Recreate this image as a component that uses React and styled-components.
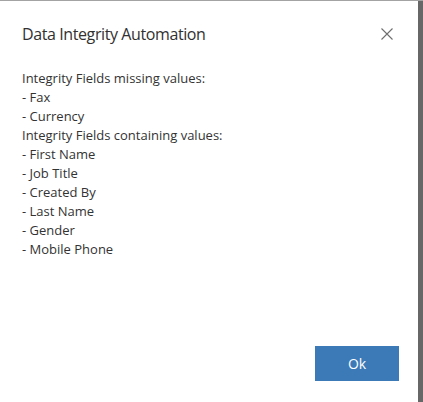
import React from "react";
import styled, { createGlobalStyle } from "styled-components";

const Global = createGlobalStyle`
  html, body { margin: 0; padding: 0; background: #676767; }
  body { font-family: "Open Sans", "Noto Sans", sans-serif; }
`;

const Page = styled.div`
  width: 423px;
  height: 402px;
  background: #676767;
  border-top: 1px solid #a3a3a3;
  box-sizing: border-box;
  overflow: hidden;
`;

const Dialog = styled.div`
  width: 418px;
  height: 401px;
  background: #ffffff;
  box-sizing: border-box;
  padding: 0 0 21px 22px;
  display: flex;
  flex-direction: column;
`;

const Header = styled.div`
  display: flex;
  align-items: center;
  justify-content: space-between;
  height: 68px;
  padding-right: 24px;
`;

const Title = styled.h1`
  margin: 0 0 2px;
  font-size: 16px;
  font-weight: 400;
  color: #323130;
  letter-spacing: -0.4px;
`;

const CloseButton = styled.button`
  border: 0;
  background: transparent;
  padding: 0;
  width: 14px;
  height: 14px;
  margin-bottom: 2px;
  display: flex;
  align-items: center;
  justify-content: center;
  cursor: pointer;
`;

const Body = styled.div`
  flex: 1;
  font-size: 13px;
  line-height: 19px;
  color: #333333;
`;

const Line = styled.div`
  white-space: pre;
`;

const Footer = styled.div`
  display: flex;
  justify-content: flex-end;
  padding-right: 19px;
`;

const OkButton = styled.button`
  width: 84px;
  height: 35px;
  border: 0;
  background: #3b79b7;
  color: #ffffff;
  font-family: "Open Sans", "Noto Sans", sans-serif;
  font-size: 14px;
  cursor: pointer;
`;

const lines = [
  "Integrity Fields missing values:",
  "- Fax",
  "- Currency",
  "Integrity Fields containing values:",
  "- First Name",
  "- Job Title",
  "- Created By",
  "- Last Name",
  "- Gender",
  "- Mobile Phone",
];

export default function App() {
  return (
    <>
      <Global />
      <Page>
        <Dialog>
          <Header>
            <Title>Data Integrity Automation</Title>
            <CloseButton aria-label="Close">
              <svg width="12" height="12" viewBox="0 0 12 12">
                <path d="M0.5 0.5 L11.5 11.5 M11.5 0.5 L0.5 11.5" stroke="#6e6e6e" strokeWidth="1.1" fill="none" />
              </svg>
            </CloseButton>
          </Header>
          <Body>
            {lines.map((l, i) => (
              <Line key={i}>{l}</Line>
            ))}
          </Body>
          <Footer>
            <OkButton>Ok</OkButton>
          </Footer>
        </Dialog>
      </Page>
    </>
  );
}
